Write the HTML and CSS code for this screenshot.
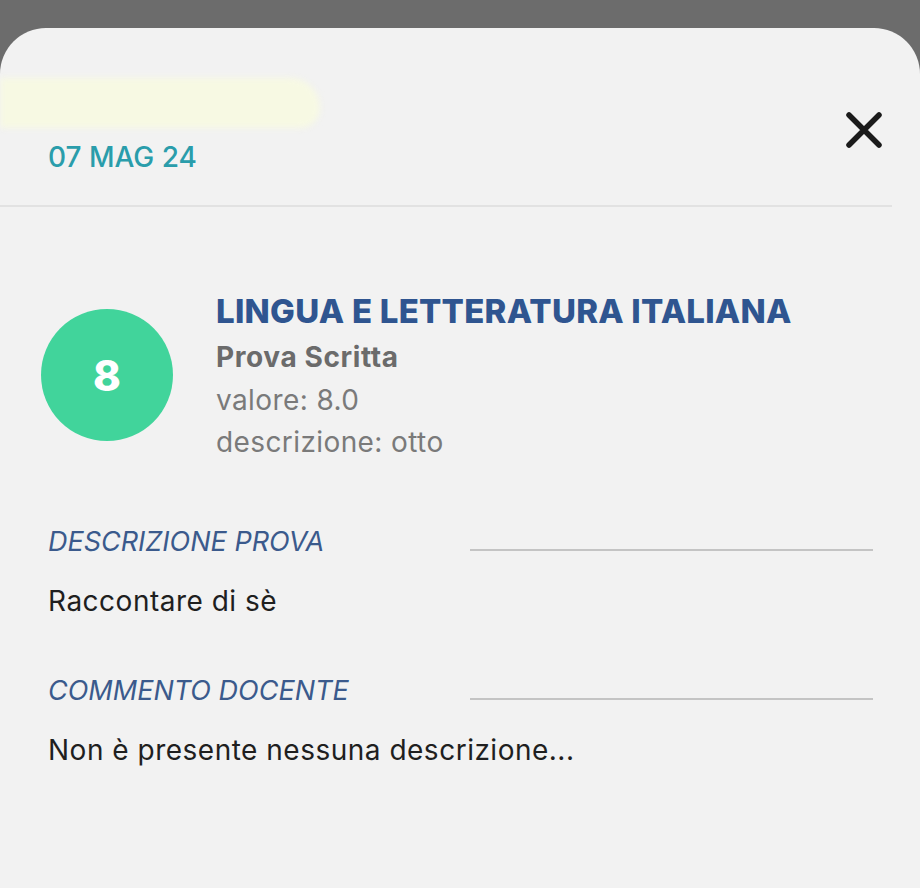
FILE: index.html
```html
<html>
    <head>
        <meta charset="utf-8">
        <link rel="stylesheet" href="styles.css">
        <title>Voto</title>
    </head>
    <body>
        <div class="sheet">
            <div class="sheet-head">
                <div class="head-left">
                    <div class="redacted"></div>
                    <div class="date">07 MAG 24</div>
                </div>
                <div class="close">
                    <svg width="38" height="38" viewBox="0 0 38 38">
                        <path d="M4 4 L34 34 M34 4 L4 34" stroke="#1b1b1b" stroke-width="5.5" stroke-linecap="round" fill="none"/>
                    </svg>
                </div>
            </div>
            <div class="divider"></div>

            <div class="grade-row">
                <div class="grade-circle">8</div>
                <div class="grade-info">
                    <div class="subject">LINGUA E LETTERATURA ITALIANA</div>
                    <div class="kind">Prova Scritta</div>
                    <div class="meta">valore: 8.0</div>
                    <div class="meta">descrizione: otto</div>
                </div>
            </div>

            <div class="section">
                <div class="section-head">
                    <div class="section-label">DESCRIZIONE PROVA</div>
                    <div class="section-line"></div>
                </div>
                <div class="section-text">Raccontare di sè</div>
            </div>

            <div class="section">
                <div class="section-head">
                    <div class="section-label">COMMENTO DOCENTE</div>
                    <div class="section-line"></div>
                </div>
                <div class="section-text">Non è presente nessuna descrizione...</div>
            </div>
        </div>
    </body>
</html>
```

FILE: styles.css
```css
body {
    margin: 0;
    background: #6c6c6c;
    font-family: "Inter", "Liberation Sans", sans-serif;
}
.sheet {
    margin-top: 28px;
    height: 860px;
    background: #f2f2f2;
    border-radius: 46px 46px 0 0;
    overflow: hidden;
}
.sheet-head {
    display: flex;
    justify-content: space-between;
    align-items: flex-start;
    padding-right: 37px;
}
.redacted {
    margin-top: 50px;
    width: 320px;
    height: 50px;
    background: #f7f9e3;
    border-radius: 0 30px 20px 0;
    filter: blur(3px);
}
.date {
    margin: 14px 0 0 48px;
    font-size: 28px;
    line-height: 30px;
    font-weight: 500;
    color: #2a9dab;
}
.close {
    margin-top: 83px;
}
.close svg {
    display: block;
}
.divider {
    margin-top: 33px;
    width: 892px;
    border-top: 2px solid #e2e2e2;
}
.grade-row {
    display: flex;
    align-items: center;
    gap: 43px;
    padding: 80px 0 0 41px;
}
.grade-circle {
    width: 132px;
    height: 132px;
    border-radius: 50%;
    background: #41d49b;
    color: #fff;
    font-size: 42px;
    font-weight: 800;
    display: flex;
    align-items: center;
    justify-content: center;
}
.subject {
    font-size: 33px;
    line-height: 48px;
    font-weight: 800;
    letter-spacing: 0.25px;
    color: #2f5590;
}
.kind {
    font-size: 28px;
    line-height: 44px;
    font-weight: 700;
    letter-spacing: 0.6px;
    color: #6b6b6b;
}
.meta {
    font-size: 28px;
    line-height: 42px;
    letter-spacing: 0.4px;
    color: #7a7a7a;
}
.section {
    padding: 0 47px 0 48px;
}
.section-head {
    display: flex;
    align-items: flex-end;
    margin-top: 62px;
}
.section + .section .section-head {
    margin-top: 56px;
}
.section-label {
    width: 422px;
    font-size: 27px;
    line-height: 34px;
    font-style: italic;
    color: #3b5a8c;
}
.section-line {
    flex: 1;
    border-top: 2px solid #c4c4c4;
    margin-bottom: 8px;
}
.section-text {
    margin-top: 25px;
    font-size: 28px;
    line-height: 34px;
    letter-spacing: 0.5px;
    color: #1f1f1f;
}
```
